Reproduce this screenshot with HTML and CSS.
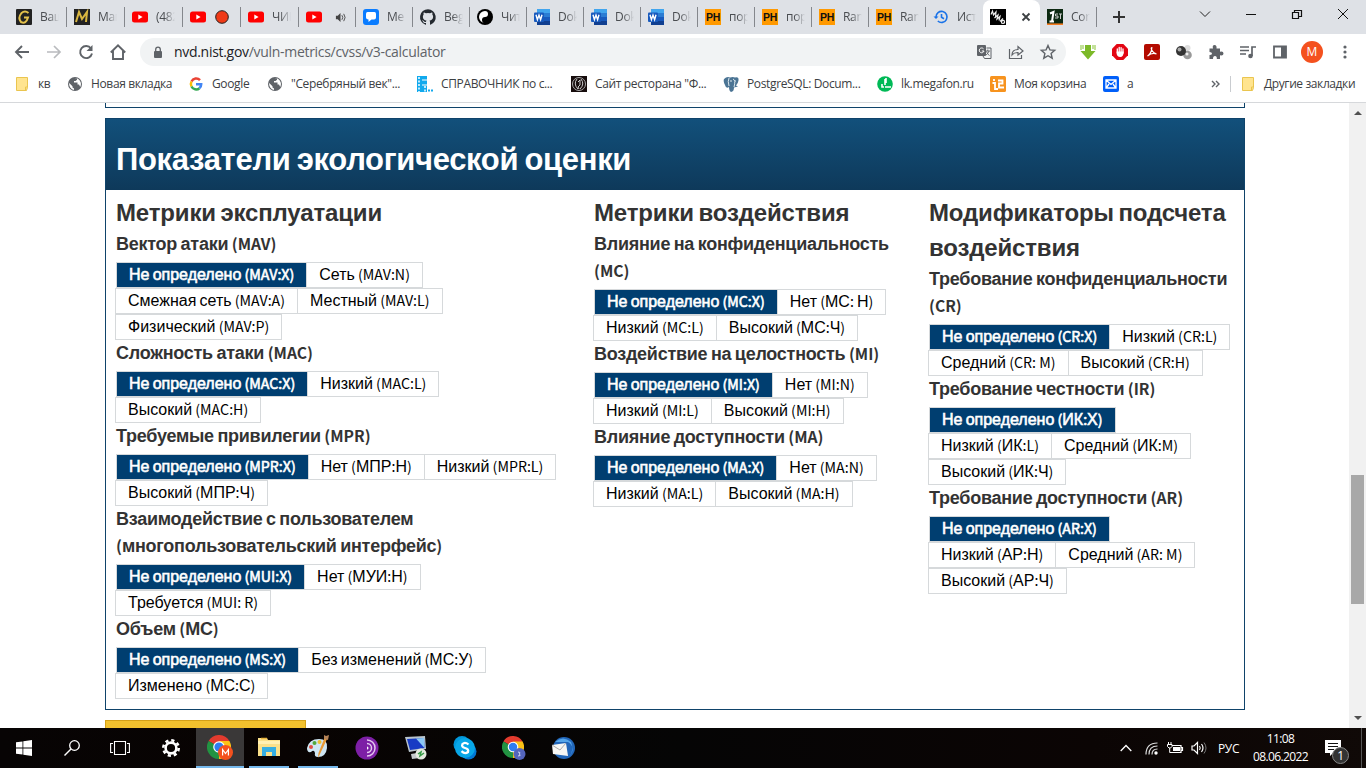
FILE: index.html
```html
<!DOCTYPE html>
<html lang="ru">
<head>
<meta charset="utf-8">
<title>CVSS v3 Calculator</title>
<link rel="stylesheet" href="styles.css">
</head>
<body>
<svg class="defs" width="0" height="0">
  <defs>
    <symbol id="yt" viewBox="0 0 16 16"><rect y="2.5" width="16" height="11" rx="2.5" fill="#f00"/><path d="M6.3 5.6v4.8l4.3-2.4z" fill="#fff"/></symbol>
    <symbol id="word" viewBox="0 0 16 16"><rect x="3" width="13" height="16" rx="1" fill="#2b7cd3"/><path d="M3 0h13v4H3z" fill="#41a5ee"/><path d="M3 8h13v4H3z" fill="#185abd"/><path d="M3 12h13v4H3z" fill="#103f91"/><rect y="3.5" width="10" height="9.5" rx="1" fill="#185abd"/><path d="M2 5.7l1.4 5 1.6-4.6 1.6 4.6 1.4-5" fill="none" stroke="#fff" stroke-width="1.4"/></symbol>
    <symbol id="globe" viewBox="0 0 16 16"><circle cx="8" cy="8" r="7" fill="#5f6368"/><path d="M2.200 7l3.300 3.300v1.200l1.500 1V14A6.200 6.200 0 0 1 2.200 7zM7.500 2.200L10 2.300v1.500L8.500 5H7v1.500h3.500v2H12l1.200 2.500A6.200 6.200 0 0 0 10.500 2.500z" fill="#fff"/></symbol>
    <symbol id="folder" viewBox="0 0 14 16"><path d="M1.500 1.500h11v10l-1 3h-10z" fill="#ffe48f" stroke="#eac54f"/><path d="M10.500 14.500v-3.500h2" fill="none" stroke="#eac54f"/></symbol>
    <symbol id="chrome" viewBox="0 0 24 24"><path d="M12 12L1.600 6A12 12 0 0 1 22.400 6z" fill="#e33b2e"/><path d="M12 12L22.400 6A12 12 0 0 1 12 24z" fill="#fbc116"/><path d="M12 12v12A12 12 0 0 1 1.600 6z" fill="#229342"/><path d="M12 6h10.400l-5.200 9z" fill="#fbc116"/><circle cx="12" cy="12" r="5.800" fill="#fff"/><circle cx="12" cy="12" r="4.600" fill="#2f7cf0"/></symbol>
  </defs>
</svg>

<header class="browser">
  <div class="tabstrip">
    <div class="tab"><svg class="fav" viewBox="0 0 16 16"><rect width="16" height="16" rx="1" fill="#222"/><path d="M12.500 4Q9 1 5.500 4 1.500 9 5 13q5 2.500 7-4.500H8" fill="none" stroke="#e3c14c" stroke-width="2"/></svg><span class="tt">Ваш</span></div>
    <div class="tab"><svg class="fav" viewBox="0 0 16 16"><rect width="16" height="16" fill="#222"/><path d="M2 13L5 3l3 7 5-7-1 10" fill="none" stroke="#d9b640" stroke-width="2"/></svg><span class="tt">Маг</span></div>
    <div class="tab"><svg class="fav"><use href="#yt"/></svg><span class="tt">(482</span></div>
    <div class="tab"><svg class="fav"><use href="#yt"/></svg><span class="tt wide"><svg class="dot" viewBox="0 0 14 14"><circle cx="7" cy="7" r="6.300" fill="#f03a17" stroke="#222"/></svg></span></div>
    <div class="tab"><svg class="fav"><use href="#yt"/></svg><span class="tt">ЧИН</span></div>
    <div class="tab"><svg class="fav"><use href="#yt"/></svg><svg class="sound" viewBox="0 0 12 12"><path d="M1 4h2l3-3v10L3 8H1z" fill="#444"/><path d="M7.500 3.500q2 2.500 0 5M9.500 2q3 4 0 8" fill="none" stroke="#444"/></svg></div>
    <div class="tab"><svg class="fav" viewBox="0 0 16 16"><rect width="16" height="16" rx="3" fill="#0a7cff"/><path d="M4.500 3h7Q13 3 13 5v3.500q0 2-2 2H8.500L5.500 13v-2.500Q3 10.500 3 8.500V5q0-2 1.500-2z" fill="#fff"/></svg><span class="tt">Ме</span></div>
    <div class="tab"><svg class="fav" viewBox="0 0 16 16"><path d="M8 .2a8 8 0 0 0-2.500 15.600c.4 0 .5-.2.500-.4v-1.500c-2.200.5-2.700-1-2.700-1-.4-.9-.9-1.200-.9-1.200-.7-.5.1-.5.1-.5.800.1 1.200.8 1.200.8.700 1.300 1.900.9 2.300.7.100-.5.300-.9.500-1.100-1.800-.2-3.600-.9-3.600-4 0-.9.300-1.600.8-2.100-.1-.2-.4-1 .1-2.100 0 0 .7-.2 2.200.8a7.600 7.600 0 0 1 4 0c1.500-1 2.200-.8 2.200-.8.400 1.100.2 1.900.1 2.100.5.600.8 1.300.8 2.100 0 3.100-1.900 3.800-3.700 4 .3.300.6.800.6 1.500v2.200c0 .2.100.5.500.4A8 8 0 0 0 8 .2z" fill="#24292f"/></svg><span class="tt">Beg</span></div>
    <div class="tab"><svg class="fav" viewBox="0 0 16 16"><circle cx="8" cy="8" r="8"/><path d="M8 14A3 3 0 0 1 8 8a3 3 0 0 0 0-6 6 6 0 0 0 0 12z" fill="#fff"/><circle cx="8" cy="5" r="1.100" fill="#fff"/><circle cx="8" cy="11" r="1.100"/></svg><span class="tt">Чит</span></div>
    <div class="tab"><svg class="fav"><use href="#word"/></svg><span class="tt">Dok</span></div>
    <div class="tab"><svg class="fav"><use href="#word"/></svg><span class="tt">Dok</span></div>
    <div class="tab"><svg class="fav"><use href="#word"/></svg><span class="tt">Dok</span></div>
    <div class="tab"><span class="fav ph">PH</span><span class="tt">пор</span></div>
    <div class="tab"><span class="fav ph">PH</span><span class="tt">пор</span></div>
    <div class="tab"><span class="fav ph">PH</span><span class="tt">Ran</span></div>
    <div class="tab"><span class="fav ph">PH</span><span class="tt">Ran</span></div>
    <div class="tab nosep"><svg class="fav" viewBox="0 0 16 16" fill="none" stroke="#1a73e8" stroke-width="1.600"><path d="M3 8a5.500 5.500 0 1 1 1.800 4M8.500 5v3.300l2.500 1.500"/><path d="M.5 7.500L3 10l2.500-2.500z" fill="#1a73e8" stroke="none"/></svg><span class="tt">Ист</span></div>
    <div class="tab active"><svg class="fav" viewBox="0 0 16 16"><rect width="16" height="16"/><path d="M1 5.500L2.500 2l1 4L6 3l-.5 5M4.500 9L8 6l-1 4 3-2.500-1 4" fill="none" stroke="#eee" stroke-width="1.200"/><path d="M10 12.500l3-3M11.500 13.500q0-2.500 2.500-2 1.500 2.500-1 3-1.500 0-1.500-1z" fill="none" stroke="#eee" stroke-width="1.200"/></svg><svg class="close" viewBox="0 0 10 10"><path d="M1.500 1.500l7 7m0-7l-7 7" stroke="#3c4043" stroke-width="1.800"/></svg></div>
    <div class="tab"><svg class="fav" viewBox="0 0 16 16"><rect width="16" height="16" fill="#0c2912"/><path d="M3 4.500L6.500 3 5 12.500M2.500 12.500H7" stroke="#fff" stroke-width="2" fill="none"/><path d="M11 5H8.500v2H11v2H8M12 5h3M13.500 5v5" stroke="#ccc" fill="none"/><path d="M0 15.200h16" stroke="#f47c20" stroke-width="1.600"/></svg><span class="tt">Cor</span></div>
    <svg class="plus" viewBox="0 0 12 12"><path d="M6 0v12M0 6h12" stroke="#333" stroke-width="2"/></svg>
    <div class="winctl">
      <svg viewBox="0 0 12 12"><path d="M1 3.500l5 5 5-5" fill="none" stroke="#222"/></svg>
      <svg viewBox="0 0 12 12"><path d="M1 6.500h10" stroke="#111"/></svg>
      <svg viewBox="0 0 12 12"><path d="M1.500 4.500h6v6h-6zM3.500 4.500v-2h7v6h-3" fill="none" stroke="#111" stroke-width="1.200"/></svg>
      <svg viewBox="0 0 12 12"><path d="M1 1l10 10M11 1L1 11" stroke="#111"/></svg>
    </div>
  </div>

  <div class="toolbar">
    <svg class="nav" viewBox="0 0 16 16"><path d="M15 8H2M8 2L2 8l6 6" fill="none" stroke="#5f6368" stroke-width="1.900"/></svg>
    <svg class="nav" viewBox="0 0 16 16"><path d="M1 8h13M8 2l6 6-6 6" fill="none" stroke="#b9bbbe" stroke-width="1.700"/></svg>
    <svg class="nav" viewBox="0 0 16 16"><path d="M13 4.500a6 6 0 1 0 1 5" fill="none" stroke="#5f6368" stroke-width="1.900"/><path d="M14.500 1v6h-6z" fill="#5f6368"/></svg>
    <svg class="nav" viewBox="0 0 16 16"><path d="M.8 8.500L8 1.300l7.200 7.200M3 7v8h10V7" fill="none" stroke="#5f6368" stroke-width="1.900"/></svg>
    <div class="omnibox">
      <svg class="lock" viewBox="0 0 10 13"><rect x="1" y="5" width="8" height="7" rx="1" fill="#5f6368"/><path d="M2.700 6V3.500a2.300 2.300 0 0 1 4.600 0V6" fill="none" stroke="#5f6368" stroke-width="1.300"/></svg>
      <span class="url"><b>nvd.nist.gov</b>/vuln-metrics/cvss/v3-calculator</span>
      <svg class="ob" viewBox="0 0 16 16"><rect x="1" y="1" width="9" height="11" rx="1" fill="#5f6368"/><path d="M7.500 4.800A2.400 2.400 0 1 0 8 7H5.800" fill="none" stroke="#fff"/><path d="M10.500 4H15v10.500H8.500L7 12" fill="none" stroke="#5f6368"/><path d="M9.500 7h4.500M11.800 5.500V7M13 7q-1 3-3 4M10.500 7.500q1 3 3 4" stroke="#5f6368" fill="none" stroke-width=".9"/></svg>
      <svg class="ob" viewBox="0 0 16 16"><path d="M1.500 5v9.500h12V11M4 11q0-5.500 6-5.500V2.500L15 7l-5 4V8.500Q6 8.300 4 11z" fill="none" stroke="#5f6368" stroke-width="1.200"/></svg>
      <svg class="ob" viewBox="0 0 16 16"><path d="M8 1.500l1.900 4.400 4.800.4-3.600 3.200 1.100 4.700L8 11.700l-4.200 2.500 1.100-4.700L1.300 6.300l4.800-.4z" fill="none" stroke="#5f6368" stroke-width="1.400"/></svg>
    </div>
    <div class="exts">
      <svg viewBox="0 0 16 16"><path d="M5 1h6v6h4.500L8 15.500.5 7H5z" fill="#7cb928"/><path d="M1 1v5M3 1v4M13 1v4M15 1v5" stroke="#9bce55" stroke-width="1.200"/></svg>
      <svg viewBox="0 0 16 16"><path d="M4.700 0h6.600L16 4.700v6.600L11.300 16H4.700L0 11.300V4.700z" fill="#e30613"/><path d="M5.300 9V5M7.200 8V3.300M9.100 8V3.600M11 9V5" stroke="#fff" stroke-width="1.300" stroke-linecap="round"/><path d="M4.600 7.500h7.100q-.1 5.500-3.500 5.500T4.600 9z" fill="#fff"/></svg>
      <svg viewBox="0 0 16 16"><rect width="16" height="16" rx="2" fill="#b30b00"/><path d="M3.500 12c2-1 4.500-4.500 4.300-8.500-1.500 0 0 5 4.700 6.500C10 9 6 10 3.500 12z" fill="none" stroke="#fff" stroke-width="1.200"/></svg>
      <svg viewBox="0 0 16 16"><circle cx="11.500" cy="4" r="3" fill="#ddd"/><circle cx="11.500" cy="11" r="4.300" fill="#999"/><circle cx="5" cy="7" r="5" fill="#333"/><circle cx="3.500" cy="5.500" r="2" fill="#aaa"/><circle cx="11" cy="10" r="1.500" fill="#eee"/></svg>
      <svg viewBox="0 0 16 16"><path d="M1.500 4.500H5q-1-3.500 1.500-3.500T8.500 4.500H12v3.300q3.500-.8 3.500 1.700T12 11.300V15H8.800q.3-3-1.800-3t-2 3H1.500v-4q2.500 0 2.500-1.500T1.500 8z" fill="#5f6368"/></svg>
      <svg viewBox="0 0 16 16"><path d="M0 3h9M0 6.500h9M0 10h6M12 12V3h4" stroke="#5f6368" stroke-width="1.700" fill="none"/><circle cx="10.500" cy="12" r="2.300" fill="#5f6368"/></svg>
      <svg viewBox="0 0 16 16"><path d="M2 2.500h12v11H2z" fill="#fff" stroke="#5f6368" stroke-width="1.800"/><path d="M9 2h5v12H9z" fill="#5f6368"/></svg>
    </div>
    <span class="avatar">М</span>
    <svg class="kebab" viewBox="0 0 4 16"><g fill="#5f6368"><circle cx="2" cy="3" r="1.600"/><circle cx="2" cy="8" r="1.600"/><circle cx="2" cy="13" r="1.600"/></g></svg>
  </div>

  <div class="bookmarks">
    <span class="bm w1"><svg class="fold" viewBox="0 0 14 16"><use href="#folder"/></svg>кв</span>
    <span class="bm w2"><svg><use href="#globe"/></svg>Новая вкладка</span>
    <span class="bm w3"><svg viewBox="0 0 16 16" fill="none" stroke-width="2.500"><path d="M12 4.200A5.200 5.200 0 0 0 3.500 5.500" stroke="#ea4335"/><path d="M3.500 5.500a5.300 5.300 0 0 0 0 5" stroke="#fbbc05"/><path d="M3.500 10.500a5.200 5.200 0 0 0 8 1.700" stroke="#34a853"/><path d="M11.500 12.200q1.700-1.700 1.700-4H8" stroke="#4285f4"/></svg>Google</span>
    <span class="bm w4"><svg><use href="#globe"/></svg>"Серебряный век"...</span>
    <span class="bm w5"><svg viewBox="0 0 16 16"><path d="M0 0h10v16H0z" fill="#11a9ed"/><path d="M2 1v15M8 10v6" stroke="#fff" stroke-width="1.500" stroke-dasharray="2 1.500"/><path d="M5 4h5M5 9h5" stroke="#fff"/><path d="M11 14.500h2m1 0h2" stroke="#11a9ed" stroke-width="2"/></svg>СПРАВОЧНИК по с...</span>
    <span class="bm w6"><svg viewBox="0 0 16 16"><rect width="16" height="16" fill="#170d0d"/><circle cx="8" cy="8" r="6.500" fill="none" stroke="#aaa"/><path d="M6 3q-4 5 1 10M10 3q4 5-1 10M7 6l2-2v5l-2 2 1 2" fill="none" stroke="#ccc"/></svg>Сайт ресторана "Ф...</span>
    <span class="bm w7"><svg viewBox="0 0 16 16"><path d="M1 3Q4 0 7 1.500q3-1 5 0 4-1 3.500 3-.5 3-2.500 5l2 1-4 1q0 4-3 4.500-2-1-2-5-3 2-4-2Q0 5 1 3z" fill="#4b7494"/><path d="M6 2q-1.500 3 0 8M10 3q3 1 1 8M7 5h2M12 5h1" stroke="#dce8ee" fill="none"/></svg>PostgreSQL: Docum...</span>
    <span class="bm w8"><svg viewBox="0 0 16 16"><circle cx="8" cy="8" r="7.800" fill="#00b956"/><path d="M8 3v6M5 8v3h2M8 11h6M9 2v5" stroke="#fff" stroke-width="1.600" fill="none"/></svg>lk.megafon.ru</span>
    <span class="bm w9"><svg viewBox="0 0 16 16"><rect width="16" height="16" rx="1.500" fill="#f7931e"/><path d="M2.500 7H5v6h3M4 3v2M8 4.500h4.500v3H9v4h5" fill="none" stroke="#fff" stroke-width="1.800"/></svg>Моя корзина</span>
    <span class="bm w10"><svg viewBox="0 0 16 16"><rect width="16" height="16" rx="2" fill="#005ff9"/><path d="M3 4h10v8H3zM3.500 4.500L8 8.500l4.500-4M3.500 11.500L6 8M12.500 11.500L10 8" fill="none" stroke="#fff" stroke-width="1.300"/></svg>а</span>
    <svg class="more" viewBox="0 0 9 8"><path d="M1 1l3 3-3 3M5 1l3 3-3 3" fill="none" stroke="#5f6368" stroke-width="1.400"/></svg>
    <span class="bm other"><svg class="fold" viewBox="0 0 14 16"><use href="#folder"/></svg>Другие закладки</span>
  </div>
</header>

<main class="viewport">
  <div class="page">
    <div class="prev-panel"></div>
    <section class="panel">
      <h2 class="panel-title">Показатели экологической оценки</h2>
      <div class="columns" id="columns"></div>
    </section>
    <div class="notice"></div>
  </div>
  <div class="scrollbar">
    <svg viewBox="0 0 8 5"><path d="M0 5l4-4 4 4z" fill="#505050"/></svg>
    <div class="thumb"></div>
    <svg viewBox="0 0 8 5"><path d="M0 0l4 4 4-4z" fill="#505050"/></svg>
  </div>
</main>

<footer class="taskbar">
  <span class="task"><svg viewBox="0 0 16 16" width="16"><path d="M0 2.300L6.500 1.400v6.100H0zM7.300 1.300L16 0v7.500H7.300zM0 8.400h6.500v6.200L0 13.700zM7.300 8.400H16V16l-8.700-1.300z" fill="#fff"/></svg></span>
  <span class="task"><svg viewBox="0 0 16 16" width="16"><circle cx="10.500" cy="5.500" r="4.800" fill="none" stroke="#fff" stroke-width="1.300"/><path d="M7 9L.5 15.500" stroke="#fff" stroke-width="1.500"/></svg></span>
  <span class="task"><svg viewBox="0 0 20 16" width="20"><path d="M4.500 1.500h11v13h-11zM3 3.500H.6v9H3M17 3.500h2.400v9H17" fill="none" stroke="#fff" stroke-width="1.100"/></svg></span>
  <span class="task gearcell"><svg viewBox="0 0 18 18" width="18"><circle cx="9" cy="9" r="5.400" fill="none" stroke="#fff" stroke-width="2.600"/><circle cx="9" cy="9" r="7.700" fill="none" stroke="#fff" stroke-width="2.600" stroke-dasharray="3.200 2.850"/></svg></span>
  <span class="task on"><svg viewBox="0 0 26 24" width="26"><use href="#chrome" width="24" height="24"/><circle cx="18.500" cy="17.500" r="7.500" fill="#f4511e"/><path d="M15.600 20.500v-6l2.900 4 2.900-4v6" fill="none" stroke="#fff" stroke-width="1.200"/></svg></span>
  <span class="task run"><svg viewBox="0 0 22 20" width="22"><path d="M0 1h9l1 2h12v16H0z" fill="#fae08a"/><path d="M0 4h22v3H0z" fill="#fff0b3"/><path d="M3 1.500h6" stroke="#e9b63e" stroke-width="1.500"/><path d="M4 19v-9h14v9h-4v-4H8v4z" fill="#35aee2"/></svg></span>
  <span class="task run"><svg viewBox="0 0 24 24" width="24"><path d="M1 13Q3 4 13 4q9 0 8 9-1 9-9 9-4 0-3-4Q8 14 5 17 1 18 1 13z" fill="#cfe6f3"/><circle cx="5" cy="12" r="2" fill="#df4e43"/><circle cx="8.500" cy="8" r="2" fill="#52a83b"/><circle cx="13.500" cy="7" r="2" fill="#edc02f"/><path d="M21 4l-7 15-2 4 .5-5 6-15z" fill="#e99a35"/><path d="M18 4V0l2 1 3-1-1 5z" fill="#b58358"/></svg></span>
  <span class="task"><svg viewBox="0 0 24 24" width="24"><circle cx="12" cy="12" r="11.500" fill="#7d1fa6"/><path d="M12 4a8 8 0 0 1 0 16M12 7.500a4.500 4.500 0 0 1 0 9" fill="none" stroke="#e3c8ef" stroke-width="1.500"/><path d="M12 10.500a1.500 1.500 0 0 1 0 3z" fill="#fff"/></svg></span>
  <span class="task"><svg viewBox="0 0 24 24" width="24"><path d="M1 1l20-1 1 13-17 3z" fill="#b9c4cc"/><path d="M3 3l17-1 .5 10L6 14z" fill="#183bc4"/><path d="M12 2.500l8-.5.500 10z" fill="#8cc8f5"/><path d="M7 18l6-1 3 5-8 1z" fill="#c6cacc"/><circle cx="17" cy="18" r="5.500" fill="#e5eadf"/><path d="M14 18l3-2-1 4 4-3" fill="none" stroke="#349b45" stroke-width="1.500"/></svg></span>
  <span class="task"><svg viewBox="0 0 24 24" width="24"><circle cx="9" cy="8.500" r="8.500" fill="#0098dc"/><circle cx="15.500" cy="15.500" r="8" fill="#0078d4"/><circle cx="12" cy="12" r="10" fill="#08a7e8"/><path d="M15.500 8.500Q12 5.500 9.500 8q-1.500 3 2.500 4t3 4q-3 2.500-6.500-.8" fill="none" stroke="#fff" stroke-width="2.300"/></svg></span>
  <span class="task"><svg viewBox="0 0 24 24" width="24"><use href="#chrome" width="22" height="22"/><circle cx="17.500" cy="18" r="6" fill="#5465bd"/><path d="M16 16q3 0 1.500 2 2 2-1.500 2" fill="none" stroke="#cfd5f1"/></svg></span>
  <span class="task"><svg viewBox="0 0 24 24" width="24"><circle cx="13" cy="12" r="11" fill="#2166b9"/><path d="M4 6q8-7 16 0 3 7-1 14 6-9-2-14z" fill="#55a5e9"/><path d="M1 9l14-2 2 13L2 18z" fill="#f7f7f4"/><path d="M1 9l8 5 6-7" fill="none" stroke="#aaa"/></svg></span>
  <div class="tray">
    <svg viewBox="0 0 12 8" width="12"><path d="M.7 7L6 1.500 11.300 7" fill="none" stroke="#fff" stroke-width="1.300"/></svg>
    <svg class="wifi" viewBox="0 0 13 13" width="13"><g fill="none" stroke="#ddd" stroke-width="1.200"><path d="M1 12.500Q1 1 12.500 1M4 12.500Q4 4 12.500 4M7 12.500Q7 7 12.500 7"/></g><circle cx="11" cy="11" r="1.700" fill="#fff"/></svg>
    <svg class="batt" viewBox="0 0 16 12" width="16"><path d="M5 3.500h9v7H4.500M14 5.500h1.500v3H14" fill="none" stroke="#fff" stroke-width="1.200"/><path d="M6 5h7v4H6z" fill="#fff"/><path d="M1.500 0v2M4 0v2M.5 2.500H5v2L3.500 6H2L.5 4.500zM2.700 6v4.500H5" fill="none" stroke="#fff"/></svg>
    <svg class="vol" viewBox="0 0 16 14" width="16"><path d="M1 5h2l3.500-3.500v11L3 9H1z" fill="none" stroke="#fff" stroke-width="1.200"/><path d="M8.500 5q1.500 2 0 4M10.500 3q3 4 0 8" fill="none" stroke="#fff" stroke-width="1.200"/><path d="M13 1.500q4 5.500 0 11" fill="none" stroke="#777"/></svg>
    <span class="lang">РУС</span>
    <span class="clock"><span>11:08</span><span>08.06.2022</span></span>
    <span class="note"><svg viewBox="0 0 16 16" width="16"><path d="M0 0h16v13H8l-3 3v-3H0z" fill="#fff"/><path d="M3 3.500h10M3 6.500h10M3 9.500h6" stroke="#111"/></svg><b>1</b></span>
    <span class="peek"></span>
  </div>
</footer>
<script src="metrics.js"></script>
</body>
</html>
```

FILE: metrics.js
```js
const columns = [
  { title: 'Метрики эксплуатации', groups: [
    ['Вектор атаки (MAV)', ['Не определено (MAV:X)', 'Сеть (MAV:N)'], ['Смежная сеть (MAV:A)', 'Местный (MAV:L)'], ['Физический (MAV:P)']],
    ['Сложность атаки (MAC)', ['Не определено (MAC:X)', 'Низкий (MAC:L)'], ['Высокий (MAC:H)']],
    ['Требуемые привилегии (MPR)', ['Не определено (MPR:X)', 'Нет (МПР:Н)', 'Низкий (MPR:L)'], ['Высокий (МПР:Ч)']],
    ['Взаимодействие с пользователем\n(многопользовательский интерфейс)', ['Не определено (MUI:X)', 'Нет (МУИ:Н)'], ['Требуется (MUI: R)']],
    ['Объем (МС)', ['Не определено (MS:X)', 'Без изменений (МС:У)'], ['Изменено (МС:С)']]
  ]},
  { title: 'Метрики воздействия', groups: [
    ['Влияние на конфиденциальность\n(MC)', ['Не определено (MC:X)', 'Нет (МС: Н)'], ['Низкий (MC:L)', 'Высокий (МС:Ч)']],
    ['Воздействие на целостность (MI)', ['Не определено (MI:X)', 'Нет (MI:N)'], ['Низкий (MI:L)', 'Высокий (MI:H)']],
    ['Влияние доступности (MA)', ['Не определено (MA:X)', 'Нет (MA:N)'], ['Низкий (MA:L)', 'Высокий (MA:H)']]
  ]},
  { title: 'Модификаторы подсчета\nвоздействия', groups: [
    ['Требование конфиденциальности\n(CR)', ['Не определено (CR:X)', 'Низкий (CR:L)'], ['Средний (CR: M)', 'Высокий (CR:H)']],
    ['Требование честности (IR)', ['Не определено (ИК:Х)'], ['Низкий (ИК:L)', 'Средний (ИК:M)'], ['Высокий (ИК:Ч)']],
    ['Требование доступности (AR)', ['Не определено (AR:X)'], ['Низкий (АР:Н)', 'Средний (AR: M)'], ['Высокий (АР:Ч)']]
  ]}
];

// Latin letters, spaces and punctuation use the Latin face; Cyrillic keeps the base face.
const mark = text => text.replace(/[ -~]+/g, run => `<span class="lat">${run}</span>`);

document.getElementById('columns').innerHTML = columns.map(col => `
  <div class="col"><h3>${mark(col.title)}</h3>${col.groups.map(([name, ...rows]) => `
    <div class="group"><h4>${mark(name)}</h4>${rows.map((row, r) =>
      `<div class="opts${r ? '' : ' first'}">${row.map((label, i) =>
        `<span class="opt${r + i ? '' : ' sel'}">${mark(label)}</span>`).join('')}</div>`).join('')}</div>`).join('')}</div>`).join('');
```

FILE: styles.css
```css
* { box-sizing: border-box; }
body { margin: 0; width: 1366px; height: 768px; overflow: hidden; display: flex; flex-direction: column; background: #fff; font-family: "Open Sans", "Noto Sans", sans-serif; font-size: 12px; color: #3c4043; }
svg { display: block; flex: none; overflow: visible; }
.defs { position: absolute; }
.browser { height: 103px; border-bottom: 1px solid #d6d8db; flex: none; }

.tabstrip { height: 34px; background: #dee1e6; display: flex; padding-left: 9px; }
.tab { width: 57px; flex: none; display: flex; align-items: center; gap: 8px; padding-left: 7px; position: relative; }
.tab:nth-child(-n+5) { width: 58px; }
.tab::after { content: ""; position: absolute; right: 0; top: 7px; width: 1px; height: 20px; background: #84878c; }
.tab.nosep::after, .tab.active::after { display: none; }
.tab.active { background: #fff; border-radius: 8px 8px 0 0; gap: 15px; }
.fav { width: 16px; height: 16px; flex: none; }
.ph { background: #f90; color: #111; font: bold 10.5px/16px "Liberation Sans", sans-serif; text-align: center; letter-spacing: -.2px; }
.tt { width: 19px; overflow: hidden; white-space: nowrap; display: flex; line-height: 18px; letter-spacing: -.3px; color: #4a4d51; -webkit-mask-image: linear-gradient(90deg, #000 45%, transparent); mask-image: linear-gradient(90deg, #000 45%, transparent); }
.tt.wide { -webkit-mask-image: none; mask-image: none; }
.dot { width: 14px; height: 14px; margin: 0 0 0 1px; }
.sound { width: 11px; height: 11px; margin-left: 5px; }
.close { width: 10px; height: 10px; }
.plus { width: 12px; height: 12px; margin: 11px 0 0 16px; }
.winctl { display: flex; gap: 34px; margin: 8px 17px 0 auto; }
.winctl svg { width: 12px; height: 12px; }

.toolbar { height: 35px; display: flex; align-items: center; padding: 1px 19px 0 14px; }
.nav { width: 16px; height: 16px; margin-right: 16px; }
.omnibox { width: 926px; height: 28px; margin-left: -2px; background: #f1f3f4; border-radius: 14px; display: flex; align-items: center; padding: 0 10px 0 13px; }
.lock { width: 10px; height: 13px; margin-right: 11px; }
.url { flex: 1; font-size: 14px; letter-spacing: -.3px; color: #5f6368; line-height: 20px; }
.url b { font-weight: 400; color: #202124; }
.ob { width: 16px; height: 16px; margin-left: 16px; }
.exts { display: flex; gap: 16px; margin-left: 14px; }
.exts svg { width: 16px; height: 16px; }
.avatar { width: 22px; height: 22px; border-radius: 50%; background: #f4511e; color: #fff; text-align: center; line-height: 22px; font-size: 12px; margin-left: 13px; }
.kebab { width: 4px; height: 16px; margin-left: auto; }

.bookmarks { height: 30px; display: flex; align-items: center; padding-left: 14px; }
.bm { display: flex; align-items: center; gap: 8px; flex: none; white-space: nowrap; letter-spacing: -.36px; line-height: 18px; }
.bm svg { width: 16px; height: 16px; }
.w1 { width: 53px; } .w2 { width: 121px; } .w3 { width: 79px; } .w4 { width: 150px; } .w5 { width: 154px; }
.w6 { width: 152px; } .w7 { width: 154px; } .w8 { width: 113px; } .w9 { width: 113px; } .w10 { width: 108px; }
.more { width: 9px; height: 8px; margin-right: 10px; }
.other { border-left: 1px solid #c9ccd0; padding-left: 9px; height: 16px; letter-spacing: -.4px; }

.viewport { height: 625px; display: flex; flex: none; overflow: hidden; }
.page { width: 1140px; margin-left: 105px; color: #333; font-family: "Liberation Sans", Arial, sans-serif; }
.prev-panel { height: 5px; border: 1px solid #0f436a; border-top: 0; }
.panel { margin-top: 10px; height: 592px; border: 1px solid #0f436a; }
.panel-title { margin: 0; height: 71px; padding: 0 10px; line-height: 82px; color: #fff; font-size: 31px; letter-spacing: -.33px; word-spacing: -2px; background: linear-gradient(#12507b, #0e395a); }
.columns { display: flex; padding: 4.500px 0 0 10px; }
.col { flex: none; }
.col:nth-child(1) { width: 478px; }
.col:nth-child(2) { width: 335px; }
h3, h4 { margin: 0; font-weight: 700; white-space: pre-line; }
h3 { font-size: 24px; line-height: 35.400px; margin-bottom: 1.100px; letter-spacing: -.16px; }
h4 { font-size: 18px; line-height: 26.600px; margin-bottom: 4.500px; letter-spacing: -.26px; }
.lat { font-family: "Noto Sans CJK SC", sans-serif; font-size: .87em; line-height: 1; }
h4 .lat { letter-spacing: 0; }
.opts { display: flex; height: 26px; margin-left: -1px; }
.opts.first { margin-left: 0; }
.opt { height: 26px; border: 1px solid #d6d9db; padding: 0 12px 0 12px; margin-right: -1px; font-size: 16px; line-height: 24px; color: #000; white-space: nowrap; }
.opt .lat { font-size: .887em; }
.opt.sel { background: #003e70; color: #fff; -webkit-text-stroke: .6px #fff; }
.notice { width: 201px; height: 20px; margin-top: 10px; background: #f2c12e; border: 1px solid #d4a017; }
.scrollbar { width: 17px; margin-left: auto; background: #f1f1f1; display: flex; flex-direction: column; align-items: center; justify-content: space-between; padding: 7px 0; position: relative; }
.scrollbar svg { width: 8px; height: 5px; }
.thumb { position: absolute; left: 2px; top: 372px; width: 13px; height: 129px; background: #a8a8a8; }

.taskbar { height: 40px; background: linear-gradient(90deg, #070404, #080302 20%, #050505 50%, #0b0504 80%, #100907); display: flex; flex: none; }
.task { width: 49px; display: flex; align-items: center; justify-content: center; }
.task:nth-child(-n+3) { width: 48px; }
.task.gearcell { width: 52px; padding-left: 2px; }
.task.on { width: 48px; background: #3a3838; border-bottom: 2px solid #76b9ed; }
.task.run { width: 40px; margin: 0 4px 0 5px; border-bottom: 2px solid #76b9ed; }
.tray { margin-left: auto; display: flex; align-items: center; color: #fff; letter-spacing: -.35px; }
.wifi { margin-left: 13px; }
.batt { margin-left: 9px; }
.vol { margin-left: 8px; }
.lang { margin-left: 11px; width: 23px; }
.clock { width: 55px; margin-left: 12px; display: flex; flex-direction: column; align-items: center; line-height: 18px; white-space: nowrap; letter-spacing: -.6px; }
.note { margin-left: 17px; position: relative; }
.note b { position: absolute; left: 7px; top: 7px; width: 17px; height: 17px; border-radius: 50%; border: 1px solid #888; background: #333; font-weight: 400; line-height: 15px; text-align: center; }
.peek { width: 1px; height: 40px; background: #555; margin: 0 4px 0 20px; }
```
